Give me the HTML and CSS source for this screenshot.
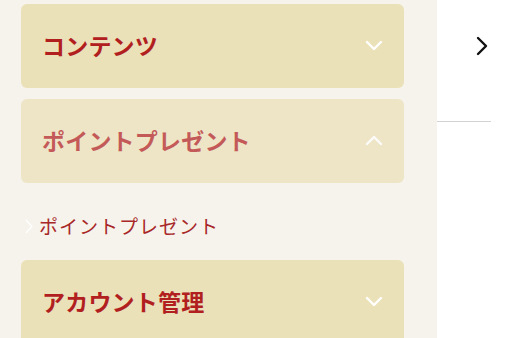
FILE: index.html
```html
<!DOCTYPE html>
<html lang="ja">
<head>
<meta charset="utf-8">
<link rel="stylesheet" href="styles.css">
</head>
<body>
<div class="layout">
  <aside class="sidebar">
    <div class="card">
      <span class="card-title">コンテンツ</span>
      <svg class="chev" width="18" height="11" viewBox="0 0 18 11"><path d="M2 2 L9 9 L16 2" fill="none" stroke="#fff" stroke-width="2.4" stroke-linecap="round" stroke-linejoin="round"/></svg>
    </div>
    <div class="card card-open">
      <span class="card-title">ポイントプレゼント</span>
      <svg class="chev" width="18" height="11" viewBox="0 0 18 11"><path d="M2 9 L9 2 L16 9" fill="none" stroke="#fff" stroke-width="2.4" stroke-linecap="round" stroke-linejoin="round"/></svg>
    </div>
    <ul class="sub">
      <li class="sub-item">
        <svg class="sub-chev" width="8" height="15" viewBox="0 0 8 15"><path d="M1 1 L7 7.5 L1 14" fill="none" stroke="#fff" stroke-width="1.2"/></svg>
        <span>ポイントプレゼント</span>
      </li>
    </ul>
    <div class="card">
      <span class="card-title">アカウント管理</span>
      <svg class="chev" width="18" height="11" viewBox="0 0 18 11"><path d="M2 2 L9 9 L16 2" fill="none" stroke="#fff" stroke-width="2.4" stroke-linecap="round" stroke-linejoin="round"/></svg>
    </div>
  </aside>
  <main class="main">
    <div class="main-head">
      <svg width="14" height="20" viewBox="0 0 14 20"><path d="M3 2 L11 10 L3 18" fill="none" stroke="#111" stroke-width="2.4" stroke-linecap="round" stroke-linejoin="round"/></svg>
    </div>
    <div class="divider"></div>
  </main>
</div>
</body>
</html>
```
FILE: styles.css
```css
html, body {
  margin: 0;
  padding: 0;
  background: #ffffff;
  font-family: "Noto Sans CJK JP", "Noto Sans", sans-serif;
}
.layout {
  display: flex;
  height: 338px;
  overflow: hidden;
}
.sidebar {
  width: 437px;
  flex: none;
  box-sizing: border-box;
  background: #f6f3ec;
  padding: 4px 33px 0 21px;
}
.card {
  height: 84px;
  box-sizing: border-box;
  background: #ebe1b8;
  border-radius: 6px;
  display: flex;
  align-items: center;
  justify-content: space-between;
  padding: 0 21px 2px 21px;
  margin-bottom: 11px;
}
.card-title {
  color: #b1201f;
  font-size: 23px;
  font-weight: 700;
  letter-spacing: 0.2px;
  line-height: 30px;
}
.card-open {
  opacity: 0.72;
  margin-bottom: 0;
}
.chev {
  display: block;
}
.sub {
  list-style: none;
  margin: 0;
  padding: 28px 0 19px 4px;
}
.sub-item {
  display: flex;
  align-items: center;
  gap: 6px;
  height: 30px;
  color: #a82828;
  font-size: 19px;
  letter-spacing: 1px;
  line-height: 30px;
}
.sub-chev {
  display: block;
}
.main {
  flex: 1;
  display: flex;
  flex-direction: column;
}
.main-head {
  height: 92px;
  display: flex;
  align-items: center;
  justify-content: flex-end;
  padding-right: 23px;
}
.divider {
  margin-top: 29px;
  width: 54px;
  border-top: 1.5px solid #d2d2d2;
}
```
